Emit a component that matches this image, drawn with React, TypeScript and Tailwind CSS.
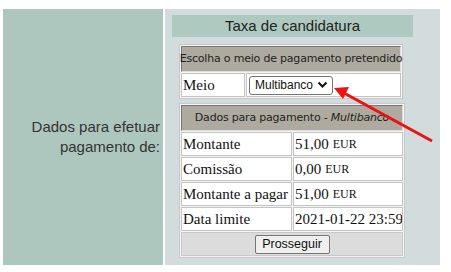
import React from "react";

const serif = { fontFamily: '"Liberation Serif", "Times New Roman", serif' };

function Row({ label, value, eur }: { label: string; value: string; eur?: boolean }) {
  return (
    <div className="flex gap-[1px] h-[24px]">
      <div className="w-[111px] border border-[#c4c4c4] bg-white flex items-center pl-[1px] text-[15px] leading-none whitespace-nowrap overflow-hidden text-[#111]" style={serif}>
        {label}
      </div>
      <div className="flex-1 border border-[#c4c4c4] bg-white flex items-center pl-[1px] text-[15px] leading-none whitespace-nowrap overflow-hidden text-[#111]" style={serif}>
        {value}
        {eur && <span className="text-[12px] ml-[4px]">EUR</span>}
      </div>
    </div>
  );
}

export default function App() {
  const hdr = { fontFamily: '"DejaVu Sans", Verdana, sans-serif' };
  return (
    <div className="relative w-[451px] h-[272px] bg-white overflow-hidden" style={{ fontFamily: '"Liberation Sans", Arial, sans-serif' }}>
      <div className="flex gap-[2px] pt-[9px] pl-[3px]">
        <div className="w-[160px] h-[256px] bg-[#adc7bf] flex items-center justify-end pr-[3px]">
          <div className="text-right text-[15px] leading-[20px] text-[#333]">
            Dados para efetuar
            <br />
            pagamento de:
          </div>
        </div>
        <div className="w-[275px] h-[256px] bg-[#d2dcdc] pt-[6px]">
          <div className="ml-[7px] w-[241px] h-[22px] bg-[#aecac0] text-center text-[15px] leading-[22px] text-[#222]">
            Taxa de candidatura
          </div>
          <div className="ml-[14px] mt-[7px] w-[224px] border border-[#c8c8c8] bg-[#f4f4f4] p-[1px] flex flex-col gap-[1px]">
            <div className="h-[26px] bg-[#aeaa9f] border border-t-[#777] border-l-[#777] border-b-[#ddd] border-r-[#ddd] flex items-center justify-center text-[11px] tracking-[-0.2px] whitespace-nowrap text-[#1e1e1e]" style={hdr}>
              Escolha o meio de pagamento pretendido
            </div>
            <div className="flex gap-[1px] h-[24px]">
              <div className="w-[64px] border border-[#c4c4c4] bg-white flex items-center pl-[1px] text-[15px] leading-none text-[#111]" style={serif}>
                Meio
              </div>
              <div className="flex-1 border border-[#c4c4c4] bg-white flex items-center pl-[2px]">
                <div className="w-[84px] h-[19px] border border-[#767676] rounded-[3px] bg-white flex items-center pl-[5px] pr-[4px] justify-between text-[12px] text-[#111]">
                  <span>Multibanco</span>
                  <svg width="11" height="8" viewBox="0 0 11 8">
                    <path d="M1.5 1.5 L5.5 5.5 L9.5 1.5" fill="none" stroke="#111" strokeWidth="2" />
                  </svg>
                </div>
              </div>
            </div>
          </div>
          <div className="ml-[14px] mt-[4px] w-[226px] border border-[#c8c8c8] bg-[#f4f4f4] p-[1px] flex flex-col gap-[1px]">
            <div className="h-[26px] bg-[#aeaa9f] border border-t-[#777] border-l-[#777] border-b-[#ddd] border-r-[#ddd] flex items-center justify-center text-[11px] tracking-[-0.2px] whitespace-nowrap text-[#1e1e1e]" style={hdr}>
              Dados para pagamento -&nbsp;<i>Multibanco</i>
            </div>
            <Row label="Montante" value="51,00" eur />
            <Row label="Comissão" value="0,00" eur />
            <Row label="Montante a pagar" value="51,00" eur />
            <Row label="Data limite" value="2021-01-22 23:59" />
            <div className="h-[24px] bg-[#dcdcdc] border border-[#c8c8c8] flex items-center justify-center">
              <button className="h-[19px] w-[75px] border border-[#767676] rounded-[2px] bg-[#efefef] text-[12.5px] text-[#111] leading-none">
                Prosseguir
              </button>
            </div>
          </div>
        </div>
      </div>
      <svg className="absolute left-0 top-0" width="451" height="272" viewBox="0 0 451 272">
        <line x1="432" y1="141" x2="344" y2="93" stroke="#ee1111" strokeWidth="3" />
        <polygon points="334,88 349,87 343,99" fill="#ee1111" />
      </svg>
    </div>
  );
}
